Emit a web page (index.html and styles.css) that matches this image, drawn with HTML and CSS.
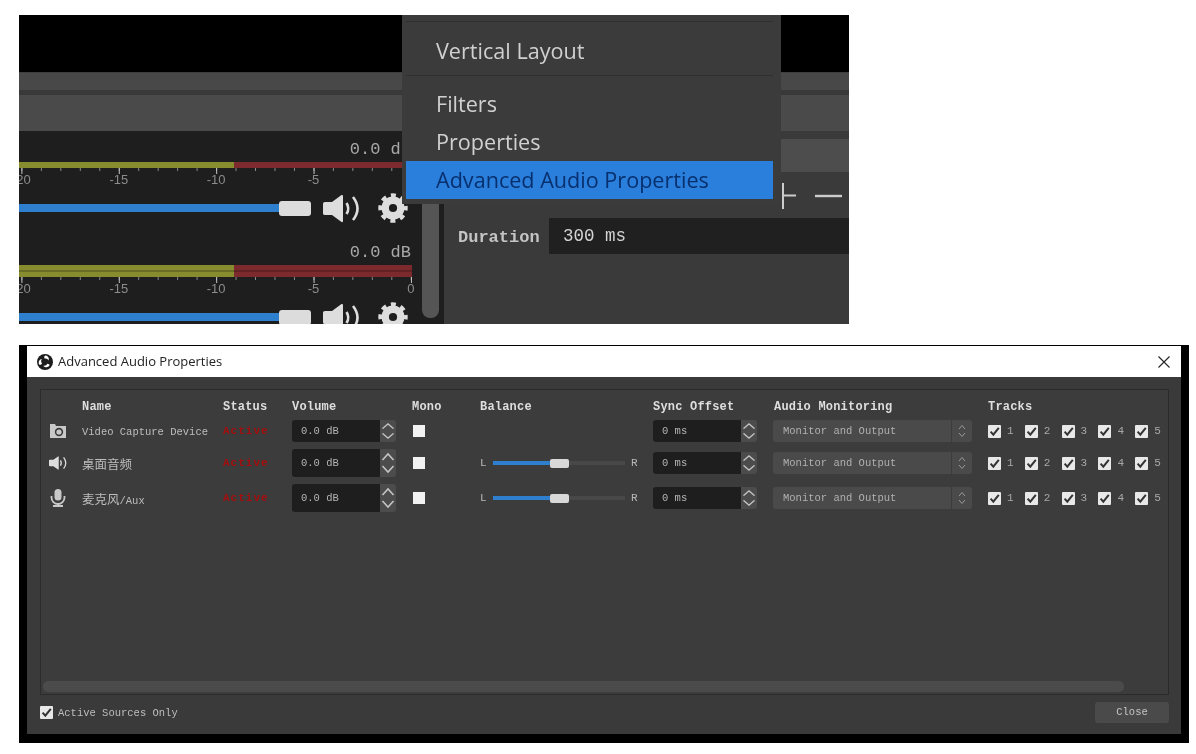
FILE: index.html
```html
<!DOCTYPE html>
<html lang="en">
<head>
<meta charset="utf-8">
<title>Advanced Audio Properties</title>
<link rel="stylesheet" href="styles.css">
</head>
<body>
<svg class="defs" xmlns="http://www.w3.org/2000/svg">
  <symbol id="speaker" viewBox="0 0 37 29">
    <path d="M0 9.5 Q0 8 2 8 H9 L18.5 1 Q20 0.5 20 2 V27 Q20 28.5 18.5 28 L9 21 H2 Q0 21 0 19.5 Z" fill="#ddd"/>
    <path d="M23.5 9 Q27 14.5 23.5 20" fill="none" stroke="#ddd" stroke-width="2.6"/>
    <path d="M30 3 Q39 14.5 30 26" fill="none" stroke="#ddd" stroke-width="2.6"/>
  </symbol>
  <symbol id="gear" viewBox="0 0 30 30">
    <circle cx="15" cy="15" r="7.8" fill="none" stroke="#ddd" stroke-width="7.4"/>
    <circle cx="15" cy="15" r="12.2" fill="none" stroke="#ddd" stroke-width="5" stroke-dasharray="4.8 4.78" stroke-dashoffset="2.4"/>
  </symbol>
  <symbol id="check" viewBox="0 0 13 13">
    <rect width="13" height="13" rx="1" fill="#e8e8e8"/>
    <path d="M2.6 6.6 L5.3 9.6 L10.8 2.8" fill="none" stroke="#333" stroke-width="2"/>
  </symbol>
  <symbol id="spin" viewBox="0 0 16 28" preserveAspectRatio="none">
    <path d="M2.5 11 L8 5 L13.5 11" fill="none" stroke="#c4c4c4" stroke-width="1.6"/>
    <path d="M2.5 17 L8 23 L13.5 17" fill="none" stroke="#c4c4c4" stroke-width="1.6"/>
  </symbol>
  <symbol id="updown" viewBox="0 0 10 16">
    <path d="M2 6 L5 2.5 L8 6" fill="none" stroke="#999" stroke-width="1"/>
    <path d="M2 10 L5 13.5 L8 10" fill="none" stroke="#999" stroke-width="1"/>
  </symbol>
</svg>

<section class="shot">
  <div class="video"></div>
  <div class="bar-a"></div>
  <div class="bar-gap"></div>
  <div class="bar-b"></div>
  <div class="lower">
    <div class="mixer">
      <div class="channels">
        <div class="channel">
          <div class="db">0.0 dB</div>
          <div class="meter meter-one"></div>
          <div class="scale"><span>-20</span><span>-15</span><span>-10</span><span>-5</span><span>0</span></div>
          <div class="fader">
            <div class="fader-fill"></div><div class="fader-thumb"></div>
            <svg class="ic-speaker"><use href="#speaker"/></svg>
            <svg class="ic-gear"><use href="#gear"/></svg>
          </div>
        </div>
        <div class="channel">
          <div class="db">0.0 dB</div>
          <div class="meter meter-two"></div>
          <div class="scale"><span>-20</span><span>-15</span><span>-10</span><span>-5</span><span>0</span></div>
          <div class="fader">
            <div class="fader-fill"></div><div class="fader-thumb"></div>
            <svg class="ic-speaker"><use href="#speaker"/></svg>
            <svg class="ic-gear"><use href="#gear"/></svg>
          </div>
        </div>
      </div>
      <div class="mixer-scroll"><div class="mixer-thumb"></div></div>
    </div>
    <div class="props">
      <div class="props-row"></div>
      <div class="props-tools">
        <svg class="ic-plus" viewBox="0 0 16 26"><path d="M1 0 V26 M1 12.5 H14" stroke="#ccc" stroke-width="2" fill="none"/></svg>
        <svg class="ic-minus" viewBox="0 0 27 4"><path d="M0 2 H27" stroke="#ccc" stroke-width="2.4"/></svg>
      </div>
      <div class="duration">
        <span class="duration-label">Duration</span>
        <div class="duration-input">300 ms</div>
      </div>
    </div>
  </div>
  <nav class="menu">
    <div class="menu-sep menu-sep-top"></div>
    <div class="menu-item menu-item-first">Vertical Layout</div>
    <div class="menu-sep"></div>
    <div class="menu-item menu-item-filters">Filters</div>
    <div class="menu-item">Properties</div>
    <div class="menu-item menu-item-active">Advanced Audio Properties</div>
  </nav>
</section>

<section class="window">
  <div class="dialog">
    <header class="title">
      <svg class="ic-obs" viewBox="0 0 16 16">
        <circle cx="8" cy="8" r="8" fill="#1c1c1c"/>
        <path d="M8.4 1.6 C11.2 1.9 12.6 4.4 11.4 6.6 C10.9 4.9 9.2 4.2 7.8 4.7 C6.8 3.5 7.2 2.2 8.4 1.6 Z" fill="#fff"/>
        <path d="M2.1 10.6 C1 8 2.4 5.3 5 5.1 C3.8 6.4 3.9 8.2 5 9.3 C4.4 10.8 3.2 11.2 2.1 10.6 Z" fill="#fff"/>
        <path d="M12.5 11.6 C10.8 13.8 7.8 13.8 6.4 11.7 C8.1 12.1 9.7 11.3 10.3 9.8 C11.8 9.9 12.7 10.5 12.5 11.6 Z" fill="#fff"/>
      </svg>
      <span class="title-text">Advanced Audio Properties</span>
      <svg class="ic-close" viewBox="0 0 12 12"><path d="M.5 .5 L11.5 11.5 M11.5 .5 L.5 11.5" stroke="#222" stroke-width="1.1"/></svg>
    </header>
    <div class="body">
      <div class="frame">
        <div class="table">
          <div></div>
          <div class="th">Name</div><div class="th">Status</div><div class="th">Volume</div><div class="th">Mono</div><div class="th">Balance</div><div class="th">Sync Offset</div><div class="th">Audio Monitoring</div><div class="th">Tracks</div>

          <div class="cell-icon">
            <svg class="ic-src" viewBox="0 0 18 16"><path d="M1 3 V1 H6 L7 3 H17 V15 H1 Z" fill="#c8c8c8"/><circle cx="10" cy="9" r="4.2" fill="#3a3a3a"/><circle cx="10" cy="9" r="2.6" fill="#c8c8c8"/></svg>
          </div>
          <div class="name">Video Capture Device</div>
          <div class="status">Active</div>
          <div class="spinbox spinbox-sm"><div class="spin-text">0.0 dB</div><svg class="spin-btn"><use href="#spin"/></svg></div>
          <div><div class="mono-box"></div></div>
          <div></div>
          <div class="spinbox spinbox-sm"><div class="spin-text">0 ms</div><svg class="spin-btn"><use href="#spin"/></svg></div>
          <div class="combo"><span class="combo-text">Monitor and Output</span><span class="combo-btn"><svg class="ic-updown"><use href="#updown"/></svg></span></div>
          <div class="tracks">
            <div class="track"><svg class="ic-check"><use href="#check"/></svg>1</div>
            <div class="track"><svg class="ic-check"><use href="#check"/></svg>2</div>
            <div class="track"><svg class="ic-check"><use href="#check"/></svg>3</div>
            <div class="track"><svg class="ic-check"><use href="#check"/></svg>4</div>
            <div class="track"><svg class="ic-check"><use href="#check"/></svg>5</div>
          </div>

          <div class="cell-icon">
            <svg class="ic-src" viewBox="0 0 37 29"><use href="#speaker"/></svg>
          </div>
          <div class="name name-cjk">桌面音频</div>
          <div class="status">Active</div>
          <div class="spinbox"><div class="spin-text">0.0 dB</div><svg class="spin-btn"><use href="#spin"/></svg></div>
          <div><div class="mono-box"></div></div>
          <div class="balance"><span>L</span><div class="bal-track"><div class="bal-fill"></div><div class="bal-thumb"></div></div><span>R</span></div>
          <div class="spinbox spinbox-sm"><div class="spin-text">0 ms</div><svg class="spin-btn"><use href="#spin"/></svg></div>
          <div class="combo"><span class="combo-text">Monitor and Output</span><span class="combo-btn"><svg class="ic-updown"><use href="#updown"/></svg></span></div>
          <div class="tracks">
            <div class="track"><svg class="ic-check"><use href="#check"/></svg>1</div>
            <div class="track"><svg class="ic-check"><use href="#check"/></svg>2</div>
            <div class="track"><svg class="ic-check"><use href="#check"/></svg>3</div>
            <div class="track"><svg class="ic-check"><use href="#check"/></svg>4</div>
            <div class="track"><svg class="ic-check"><use href="#check"/></svg>5</div>
          </div>

          <div class="cell-icon">
            <svg class="ic-src" viewBox="0 0 16 18"><rect x="4.5" y="0" width="7" height="11.5" rx="3.5" fill="#c8c8c8"/><path d="M1.5 7 V8.5 A6.5 6.5 0 0 0 14.5 8.5 V7" fill="none" stroke="#c8c8c8" stroke-width="1.8"/><path d="M8 14 V17 M3 17 H13" stroke="#c8c8c8" stroke-width="2"/></svg>
          </div>
          <div class="name name-cjk">麦克风<span class="name-latin">/Aux</span></div>
          <div class="status">Active</div>
          <div class="spinbox"><div class="spin-text">0.0 dB</div><svg class="spin-btn"><use href="#spin"/></svg></div>
          <div><div class="mono-box"></div></div>
          <div class="balance"><span>L</span><div class="bal-track"><div class="bal-fill"></div><div class="bal-thumb"></div></div><span>R</span></div>
          <div class="spinbox spinbox-sm"><div class="spin-text">0 ms</div><svg class="spin-btn"><use href="#spin"/></svg></div>
          <div class="combo"><span class="combo-text">Monitor and Output</span><span class="combo-btn"><svg class="ic-updown"><use href="#updown"/></svg></span></div>
          <div class="tracks">
            <div class="track"><svg class="ic-check"><use href="#check"/></svg>1</div>
            <div class="track"><svg class="ic-check"><use href="#check"/></svg>2</div>
            <div class="track"><svg class="ic-check"><use href="#check"/></svg>3</div>
            <div class="track"><svg class="ic-check"><use href="#check"/></svg>4</div>
            <div class="track"><svg class="ic-check"><use href="#check"/></svg>5</div>
          </div>
        </div>
        <div class="hscroll"></div>
      </div>
      <footer class="foot">
        <label class="active-only"><svg class="ic-check"><use href="#check"/></svg>Active Sources Only</label>
        <div class="close-btn">Close</div>
      </footer>
    </div>
  </div>
</section>
</body>
</html>
```

FILE: styles.css
```css
* { box-sizing: border-box; }
html, body { margin: 0; background: #fff; }
body {
  width: 1196px;
  height: 754px;
  overflow: hidden;
  padding: 15px 0 0 19px;
  font-family: "Liberation Mono", "Noto Sans CJK SC", monospace;
}
.defs { display: none; }

/* ---------- upper screenshot ---------- */
.shot {
  position: relative;
  width: 830px;
  height: 309px;
  overflow: hidden;
  background: #333;
  filter: blur(0.35px);
}
.video { height: 57px; background: #000; }
.bar-a { height: 18px; background: #484848; border-top: 1px solid #3e3e3e; }
.bar-gap { height: 5px; background: #393939; }
.bar-b { height: 36px; background: #4a4a4a; }
.lower { display: flex; height: 193px; }

.mixer { display: flex; width: 425px; background: #1e1e1e; }
.channels { width: 403px; flex: none; }
.channel { padding-top: 8px; height: 103px; }
.db {
  height: 20px;
  margin-bottom: 3px;
  padding-right: 11px;
  text-align: right;
  font-size: 17px;
  line-height: 22px;
  color: #a8a8a8;
}
.meter {
  width: 393px;
  background: linear-gradient(to right, #878c2e 215px, #7d2a2e 215px);
}
.meter-one { height: 6px; }
.meter-two {
  height: 12px;
  background:
    linear-gradient(to bottom, transparent 5px, rgba(0, 0, 0, .22) 5px, rgba(0, 0, 0, .22) 7px, transparent 7px),
    linear-gradient(to right, #878c2e 215px, #7d2a2e 215px);
}
.scale {
  display: flex;
  width: 403px;
  height: 18px;
  padding-top: 5px;
  overflow: hidden;
  font: 13px/13px "Liberation Sans", sans-serif;
  color: #8c8c8c;
  background-image:
    linear-gradient(to right, #c4c4c4 1px, transparent 1px),
    linear-gradient(to right, #8a8a8a 1px, transparent 1px);
  background-size: 97.4px 6px, 19.48px 3px;
  background-position: 2.4px 0, 2.4px 0;
  background-repeat: repeat-x;
}
.scale span { flex: none; width: 97.4px; text-align: center; }
.scale span:first-child { margin-left: -46.3px; }
.fader { display: flex; align-items: center; height: 44px; }
.fader-fill { width: 260px; height: 8px; background: #2f7fcf; }
.fader-thumb { width: 32px; height: 15px; border-radius: 3px; background: #dcdcdc; }
.ic-speaker { width: 37px; height: 29px; margin-left: 12px; flex: none; }
.ic-gear { width: 30px; height: 30px; margin-left: 18px; flex: none; }
.mixer-scroll { width: 22px; }
.mixer-thumb {
  width: 17px;
  height: 187px;
  background: #555;
  border-radius: 0 0 8px 8px;
}

.props { flex: 1; background: #3a3a3a; padding-top: 8px; }
.props-row { height: 33px; background: #4d4d4d; }
.props-tools {
  display: flex;
  align-items: center;
  height: 26px;
  margin-top: 11px;
  padding-left: 338px;
}
.ic-plus { width: 16px; height: 26px; flex: none; }
.ic-minus { width: 27px; height: 4px; margin-left: 17px; flex: none; }
.duration { display: flex; align-items: center; margin-top: 9px; padding-left: 14px; height: 36px; }
.duration-label { width: 91px; padding-top: 3px; font-size: 17px; font-weight: 700; color: #c4c4c4; flex: none; }
.duration-input {
  flex: 1;
  height: 36px;
  padding-left: 14px;
  background: #202020;
  font-size: 17.5px;
  line-height: 36px;
  color: #d4d4d4;
}

.menu {
  position: absolute;
  left: 383px;
  top: 0;
  width: 379px;
  height: 189px;
  padding: 6px 8px 0 4px;
  background: #3b3b3b;
  font-family: "Open Sans", "Noto Sans", sans-serif;
  font-size: 21.6px;
  color: #d0d0d0;
}
.menu-sep { height: 1px; background: #2f2f2f; }
.menu-item { height: 38px; padding-left: 30px; line-height: 38px; white-space: nowrap; }
.menu-item-first { height: 53px; line-height: 57px; }
.menu-item-filters { margin-top: 9px; }
.menu-item-active { background: #2a7fdc; color: #08306e; font-weight: 500; }

/* ---------- dialog ---------- */
.window {
  width: 1170px;
  height: 398px;
  margin-top: 21px;
  padding: 1px 8px 9px;
  background: #000;
  filter: blur(0.35px);
}
.dialog { display: flex; flex-direction: column; height: 100%; background: #3a3a3a; }
.title {
  display: flex;
  align-items: center;
  height: 31px;
  padding: 0 11px 0 10px;
  background: #fff;
}
.ic-obs { width: 16px; height: 16px; flex: none; }
.title-text {
  flex: 1;
  margin-left: 5px;
  padding-bottom: 2px;
  font: 13px "Open Sans", "Noto Sans", sans-serif;
  color: #222;
}
.ic-close { width: 12px; height: 12px; flex: none; }
.body { flex: 1; display: flex; flex-direction: column; padding: 12px 12px 0 13px; }
.frame {
  display: flex;
  flex-direction: column;
  height: 306px;
  border: 1px solid #2b2b2b;
  padding-top: 9px;
  background: #3c3c3c;
}
.table {
  flex: 1;
  display: grid;
  grid-template-columns: 41px 141px 69px 120px 68px 173px 121px 214px 1fr;
  grid-template-rows: 14px 22px 28px 28px;
  row-gap: 7px;
  align-content: start;
  align-items: center;
  font-size: 10.5px;
  color: #b8b8b8;
}
.th {
  align-self: start;
  font-size: 12px;
  font-weight: 700;
  line-height: 16px;
  letter-spacing: .2px;
  white-space: nowrap;
  color: #dedede;
}
.cell-icon { display: flex; justify-content: center; padding-right: 7px; }
.ic-src { width: 18px; height: 18px; display: block; }
.name { white-space: nowrap; color: #bdbdbd; padding-top: 1px; }
.name-cjk { font-family: "Noto Sans CJK SC", sans-serif; font-size: 12.5px; padding-top: 0; }
.name-latin { font-family: "Liberation Mono", monospace; font-size: 10.5px; }
.status { font-weight: 700; font-size: 11px; letter-spacing: 1px; color: #a50d0d; }
.spinbox { display: flex; height: 28px; width: 104px; }
.spinbox-sm { height: 22px; }
.spin-text {
  width: 88px;
  padding-left: 9px;
  border-radius: 3px 0 0 3px;
  background: #1e1e1e;
  color: #b4b4b4;
  display: flex;
  align-items: center;
}
.spin-btn { width: 16px; height: 100%; background: #4c4c4c; border-radius: 0 3px 3px 0; flex: none; }
.mono-box { width: 12px; height: 12px; margin-left: 1px; background: #f2f2f2; }
.balance { display: flex; align-items: center; font-size: 11px; }
.balance span { flex: none; width: 13px; }
.bal-track {
  display: flex;
  align-items: center;
  width: 132px;
  height: 4px;
  margin-right: 6px;
  background: #484848;
}
.bal-fill { width: 57px; height: 4px; background: #2f7fcf; }
.bal-thumb { width: 19px; height: 9px; border-radius: 2px; background: #d8d8d8; }
.combo {
  display: flex;
  align-items: center;
  width: 199px;
  height: 22px;
  margin-left: -1px;
  border-radius: 3px;
  background: #4a4a4a;
}
.combo-text { flex: 1; padding-left: 10px; color: #b0b0b0; }
.combo-btn {
  display: flex;
  justify-content: center;
  align-items: center;
  width: 21px;
  height: 22px;
  border-left: 1px solid #3c3c3c;
}
.ic-updown { width: 10px; height: 16px; }
.tracks { display: flex; }
.track { display: flex; align-items: center; gap: 6px; width: 36.8px; font-size: 11px; color: #a8a8a8; }
.ic-check { width: 13px; height: 13px; flex: none; }
.hscroll {
  width: 1081px;
  height: 11px;
  margin: 0 0 2px 2px;
  border-radius: 5px;
  background: #4b4b4b;
}
.foot {
  display: flex;
  justify-content: space-between;
  align-items: center;
  height: 28px;
  padding-top: 7px;
}
.active-only { display: flex; align-items: center; gap: 5px; font-size: 10.5px; color: #bdbdbd; }
.close-btn {
  width: 74px;
  height: 21px;
  border-radius: 3px;
  background: #4a4a4a;
  text-align: center;
  font-size: 10.5px;
  line-height: 21px;
  color: #c4c4c4;
}
```
